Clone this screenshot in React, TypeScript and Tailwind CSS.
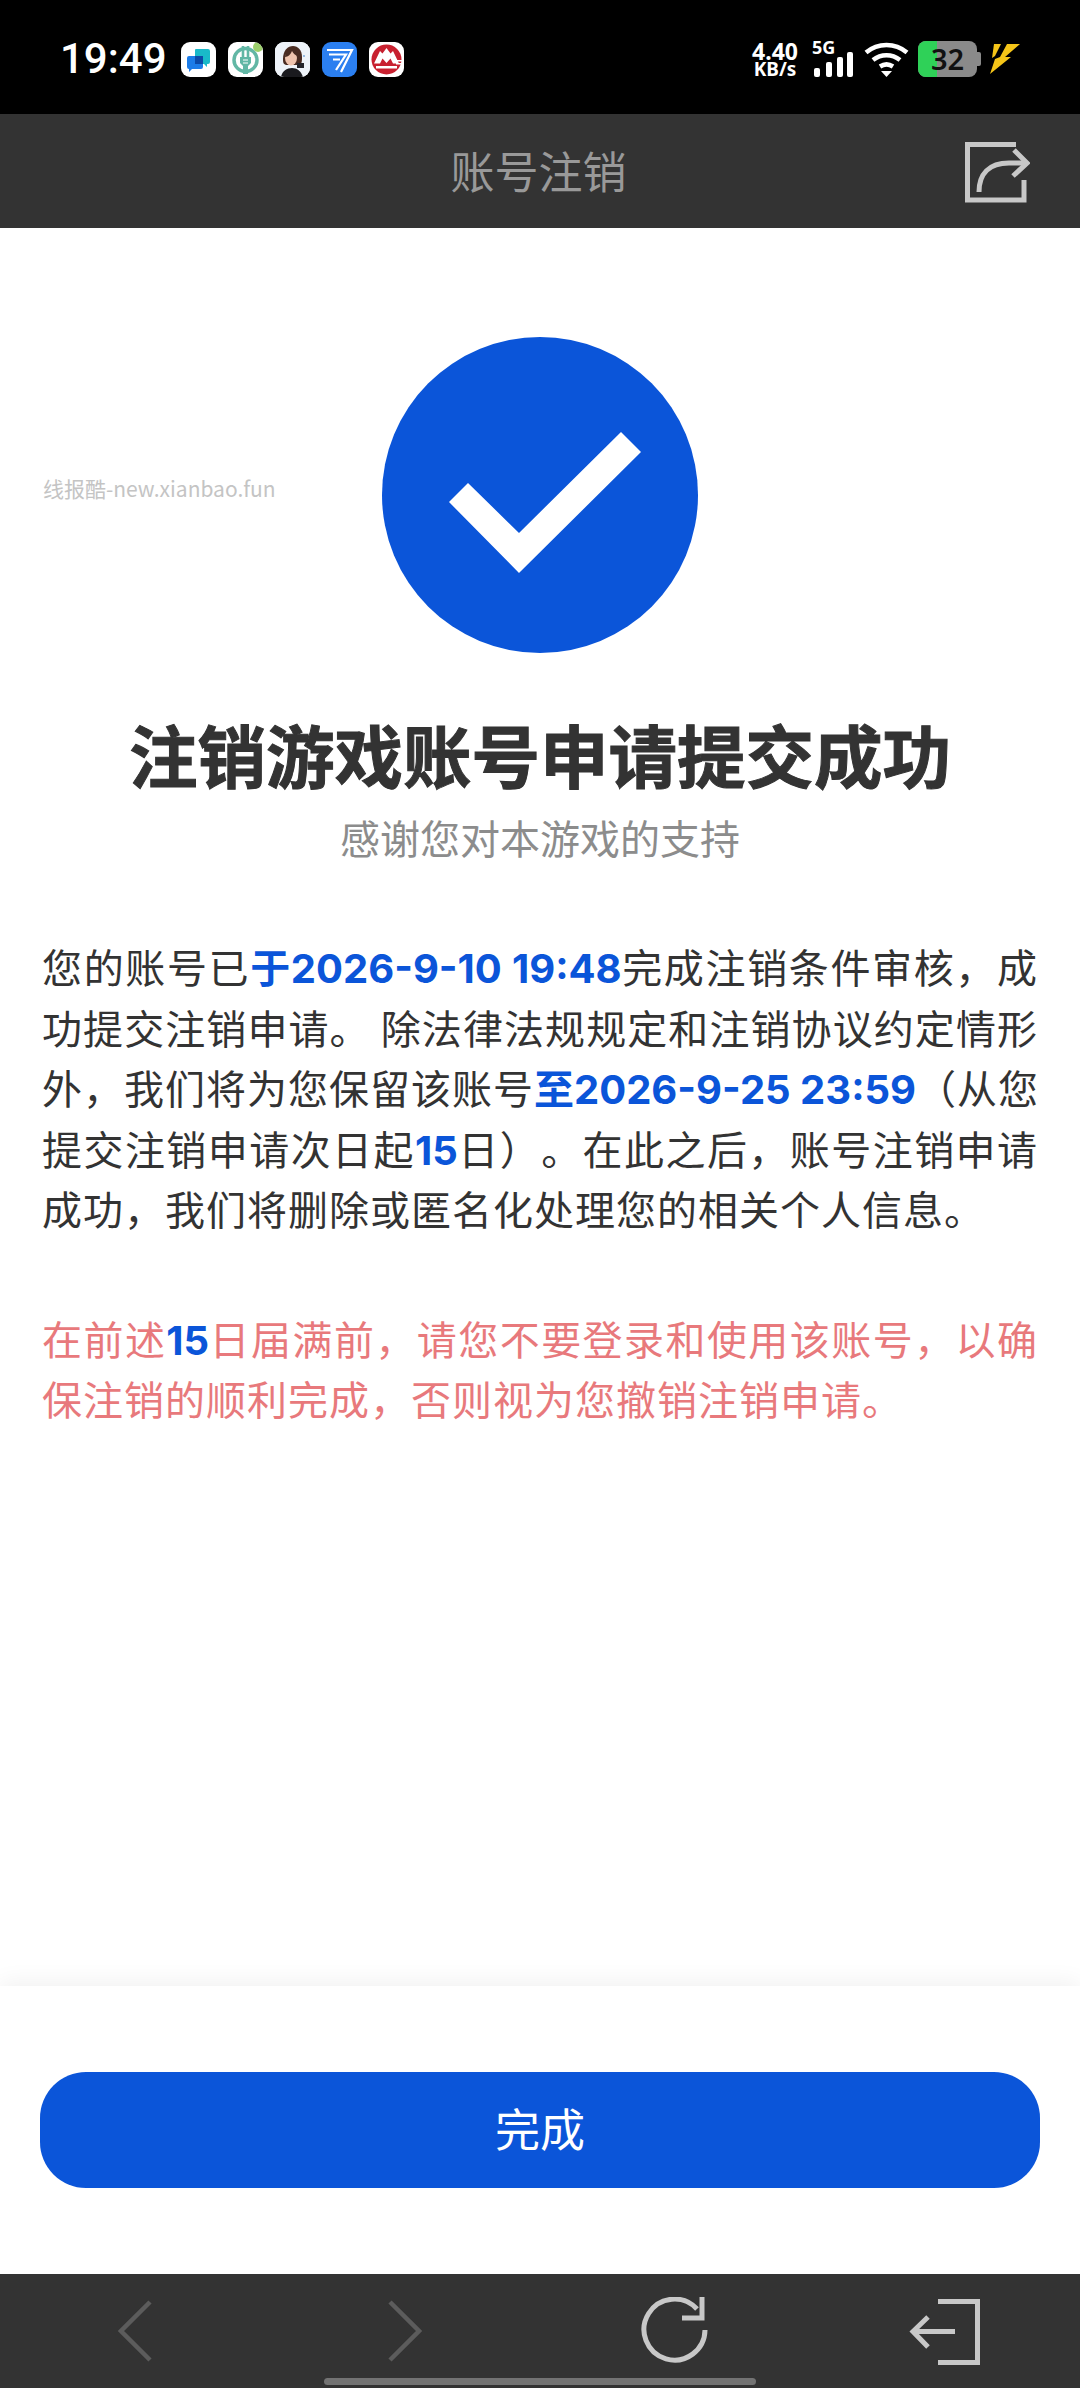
import React from 'react';

const Blue = ({ children }: { children: React.ReactNode }) => (
  <span className="font-['Inter','Noto_Sans_CJK_SC',sans-serif] leading-none font-bold tracking-normal text-[#0b55d9]">{children}</span>
);

const Line = ({ children }: { children: React.ReactNode }) => (
  <span className="block whitespace-nowrap text-justify [text-align-last:justify]">{children}</span>
);

const NotifyIcon = ({ children, className }: { children: React.ReactNode; className?: string }) => (
  <div className={`h-[35px] w-[35px] overflow-hidden rounded-[9px] ${className ?? 'bg-white'}`}>
    <svg viewBox="0 0 35 35" className="h-full w-full">{children}</svg>
  </div>
);

const StatusBar = () => (
  <div className="flex h-[114px] shrink-0 items-start justify-between bg-black pl-[60px] pr-[60px] pt-[41px]">
    <div className="flex items-center">
      <span className="w-[121px] font-['Roboto',sans-serif] text-[42px] leading-[36px] font-medium text-white">19:49</span>
      <div className="flex gap-[12px]">
        <NotifyIcon>
          <path d="M15 7h12a2 2 0 0 1 2 2v11a2 2 0 0 1-2 2h-1v3l-3-3h-8a1 1 0 0 1-1-1V8a1 1 0 0 1 1-1z" fill="#19b9c9" />
          <path d="M8 14h12a2 2 0 0 1 2 2v9a2 2 0 0 1-2 2h-9l-3 3v-3a2 2 0 0 1-2-2v-9a2 2 0 0 1 2-2z" fill="#1c7ce8" />
          <path d="M14 14h8v8h-8z" fill="#0b4aa8" />
        </NotifyIcon>
        <NotifyIcon>
          <circle cx="17.5" cy="18" r="11.500" fill="none" stroke="#62b7a5" strokeWidth="3.500" />
          <path d="M15 4v11M20 4v11" stroke="#62b7a5" strokeWidth="2.600" />
          <path d="M12 15h11v6l-3 3v8h-5v-8l-3-3z" fill="#62b7a5" />
          <path d="M15 18h5M15 21h5" stroke="#fff" strokeWidth="1" />
          <circle cx="30" cy="5" r="5" fill="#9ccf6c" />
        </NotifyIcon>
        <NotifyIcon>
          <rect width="35" height="35" fill="#eef3f9" />
          <path d="M8 17c0-9 5-13 10-13s9 4 9 11c0 4 0 7-3 8H11c-3-1-3-3-3-6z" fill="#4a2c22" />
          <ellipse cx="16" cy="16" rx="6" ry="7.500" fill="#f0c4ae" />
          <path d="M10 15c3 0 6-3 7-6 1 2 3 4 5 5V9l-5-3-6 2z" fill="#4a2c22" />
          <path d="M6 35c1-6 6-9 11-9s9 3 11 9z" fill="#1a1a1e" />
          <rect x="22" y="21" width="7" height="5" fill="#24242a" />
          <circle cx="29" cy="14" r="1" fill="#7aa7d8" />
        </NotifyIcon>
        <NotifyIcon className="bg-[#2b7ff0]">
          <g fill="none" stroke="#fff" strokeWidth="2.200">
            <path d="M5 8h25L19 30" />
            <path d="M7 12.500h17L14 28" />
            <path d="M11 17.500h7" />
          </g>
        </NotifyIcon>
        <NotifyIcon>
          <circle cx="17.500" cy="17.500" r="15" fill="#c8202f" />
          <path d="M17.500 6l4 5.500 2.500-2.500 6 12.500h-6l-2.500-5-4 4.500-4-4.500-2.500 5H5L11 9l2.500 2.500z" fill="#fff" />
          <path d="M7 24h21v2.500H7z" fill="#fff" />
          <path d="M26 18h9v1.600h-9zM27 21h8v1.600h-8z" fill="#fff" />
        </NotifyIcon>
      </div>
    </div>
    <div className="flex items-start text-white">
      <div className="flex w-[48px] flex-col items-center font-['Noto_Sans',sans-serif] font-bold">
        <span className="text-[23px] leading-[20px]">4.40</span>
        <span className="text-[19px] leading-[17px]">KB/s</span>
      </div>
      <div className="relative ml-[15px] h-[36px] w-[40px]">
        <span className="absolute top-[-4px] left-[-2px] font-['Noto_Sans',sans-serif] text-[18px] leading-[20px] font-bold">5G</span>
        <svg viewBox="0 0 40 36" className="h-full w-full" fill="#fff">
          <rect x="0" y="27" width="6" height="9" rx="2" />
          <rect x="12" y="21" width="6" height="15" rx="2" />
          <rect x="23" y="16" width="6" height="20" rx="2" />
          <rect x="33" y="11" width="6" height="25" rx="2" />
        </svg>
      </div>
      <svg viewBox="0 0 45 36" className="ml-[10px] h-[36px] w-[45px]" fill="none" stroke="#fff" strokeWidth="4.500">
        <path d="M2 11.500c12-10 29-10 41 0" />
        <path d="M9 19c8-6.500 19-6.500 27 0" />
        <path d="M16 25.500c4-2.600 9-2.600 13 0" />
        <path d="M17 30h11l-5.500 6z" fill="#fff" stroke="none" />
      </svg>
      <div className="relative ml-[9px] h-[36px] w-[63px]">
        <div className="absolute top-0 left-0 flex h-[36px] w-[59px] overflow-hidden rounded-[8px] bg-[#8a8a8a]">
          <div className="w-[19px] bg-[#2fd158]" />
        </div>
        <div className="absolute top-[11px] right-0 h-[14px] w-[4px] rounded-r-[2px] bg-[#8a8a8a]" />
        <span className="absolute top-0 left-[13px] font-['Noto_Sans',sans-serif] text-[29px] leading-[36px] font-semibold text-[#111]">32</span>
      </div>
      <svg viewBox="0 0 30 30" className="mt-[3px] ml-[9px] h-[30px] w-[30px]" fill="#f5c518">
        <path d="M4 0h7L5 12 2 14z" />
        <path d="M17 0h13L15 13h6L0 30l5-15 5-2z" />
      </svg>
    </div>
  </div>
);

const Header = () => (
  <div className="relative flex h-[114px] shrink-0 items-center justify-center bg-[#333333] pr-[3px] pb-[2px]">
    <span className="text-[44px] leading-none text-[#999999]">账号注销</span>
    <svg viewBox="0 0 66 62" className="absolute top-[27px] right-[50px] h-[62px] w-[66px]" fill="none" stroke="#c8c8c8" strokeWidth="5">
      <path d="M52 3.500H3.500V59H60V39" />
      <path d="M15 51c0-18 10-29 30-29h16" />
      <path d="M50 9l13 13-14 13" />
    </svg>
  </div>
);

const BottomNav = () => (
  <div className="relative grid h-[114px] shrink-0 grid-cols-4 bg-[#333333]">
    <div className="flex items-start justify-center pt-[26px]">
      <svg viewBox="0 0 34 62" className="h-[62px] w-[34px]" fill="none" stroke="#5c5c5c" strokeWidth="4.500">
        <path d="M32 2 3 31l29 29" />
      </svg>
    </div>
    <div className="flex items-start justify-center pt-[26px]">
      <svg viewBox="0 0 34 62" className="h-[62px] w-[34px]" fill="none" stroke="#5c5c5c" strokeWidth="4.500">
        <path d="M2 2l29 29L2 60" />
      </svg>
    </div>
    <div className="flex items-start justify-center pt-[23px]">
      <svg viewBox="0 0 68 68" className="h-[68px] w-[68px]" fill="none" stroke="#c8c8c8" strokeWidth="5">
        <path d="M64 33a30.500 30.500 0 1 1-8-21" />
        <path d="M61 0v21H41" />
      </svg>
    </div>
    <div className="flex items-start justify-center pt-[25px]">
      <svg viewBox="0 0 72 66" className="h-[66px] w-[72px]" fill="none" stroke="#c8c8c8" strokeWidth="5">
        <path d="M29 2.500h39.500v61H29" />
        <path d="M46 32.500H4" />
        <path d="M19 18 4 32.500 19 48" />
      </svg>
    </div>
    <div className="absolute top-[104px] left-[324px] h-[7px] w-[432px] rounded-full bg-[#737373]" />
  </div>
);

export default function App() {
  return (
    <div className="relative flex h-[2388px] w-[1080px] flex-col overflow-hidden bg-white font-['Noto_Sans_CJK_SC',sans-serif] [text-spacing-trim:space-all]">
      <StatusBar />
      <Header />
      <main className="flex flex-1 flex-col items-center pt-[109px]">
        <span className="absolute top-[476px] left-[43px] text-[21px] leading-[24px] text-[#c4c4c4]">线报酷-new.xianbao.fun</span>
        <svg viewBox="0 0 316 316" className="h-[316px] w-[316px]">
          <circle cx="158" cy="158" r="158" fill="#0b55d9" />
          <path d="M67 165 86 146 137 196 239 95 259 115 137 236z" fill="#fff" />
        </svg>
        <h1 className="mt-[51px] text-[68.500px] leading-[100px] font-bold text-[#333333] [-webkit-text-stroke:1px_#333333]">注销游戏账号申请提交成功</h1>
        <p className="mt-[3px] text-[40px] leading-[60px] text-[#8c8c8c]">感谢您对本游戏的支持</p>
        <div className="mt-[69px] w-[996px] text-[40px] leading-[60.500px] tracking-[1px] text-[#333333]">
          <Line>您的账号已<Blue>于2026-9-10 19:48</Blue>完成注销条件审核，成</Line>
          <Line>功提交注销申请。 除法律法规规定和注销协议约定情形</Line>
          <Line>外，我们将为您保留该账号<Blue>至2026-9-25 23:59</Blue>（从您</Line>
          <Line>提交注销申请次日起<Blue>15</Blue>日）。在此之后，账号注销申请</Line>
          <span className="block whitespace-nowrap">成功，我们将删除或匿名化处理您的相关个人信息。</span>
        </div>
        <div className="mt-[69px] w-[996px] text-[40px] leading-[60px] tracking-[1px] text-[#e8797c]">
          <Line>在前述<Blue>15</Blue>日届满前，请您不要登录和使用该账号，以确</Line>
          <span className="block whitespace-nowrap">保注销的顺利完成，否则视为您撤销注销申请。</span>
        </div>
      </main>
      <div className="flex h-[288px] shrink-0 flex-col bg-white px-[40px] pt-[86px] shadow-[0_-4px_22px_rgba(0,0,0,0.06)]">
        <button className="flex h-[116px] w-full items-center justify-center rounded-[46px] bg-[#0b55d9] pb-[6px] text-[45px] leading-none text-white">完成</button>
      </div>
      <BottomNav />
    </div>
  );
}
